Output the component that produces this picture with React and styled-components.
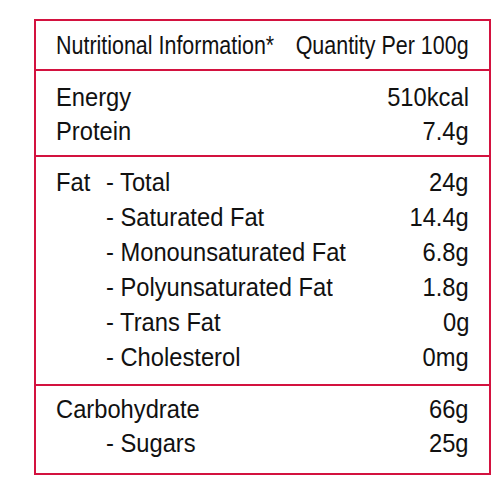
import styled, { createGlobalStyle } from "styled-components";

const Global = createGlobalStyle`
  body {
    margin: 0;
    background: #fff;
  }
`;

const Page = styled.div`
  width: 500px;
  height: 500px;
  padding: 19px 0 0 34px;
  box-sizing: border-box;
`;

const Panel = styled.div`
  width: 457px;
  box-sizing: border-box;
  border: 2px solid #d3123f;
  font-family: "Liberation Sans", Arial, sans-serif;
  color: #111;
`;

const Section = styled.div`
  padding: ${(p) => p.$top || 0}px 20px ${(p) => p.$bottom || 0}px;
  border-bottom: ${(p) => (p.$last ? "none" : "2px solid #d3123f")};
`;

const Row = styled.div`
  display: grid;
  grid-template-columns: 50px 1fr auto;
  align-items: center;
  height: ${(p) => p.$h || 34}px;
  white-space: nowrap;
  font-size: ${(p) => (p.$head ? 26 : 25.5)}px;
`;

// the label's font is a narrow Arial, so squeeze Liberation Sans sideways
const Cell = styled.span`
  display: block;
  transform: scaleX(${(p) => p.$scale || 0.93});
`;

const Label = styled(Cell)`
  grid-column: ${(p) => (p.$wide ? "1 / 3" : "2")};
  transform-origin: left center;
`;

const Group = styled(Cell)`
  grid-column: 1;
  transform-origin: left center;
`;

const Value = styled(Cell)`
  grid-column: 3;
  text-align: right;
  transform-origin: right center;
`;

const fats = [
  ["- Total", "24g"],
  ["- Saturated Fat", "14.4g"],
  ["- Monounsaturated Fat", "6.8g"],
  ["- Polyunsaturated Fat", "1.8g"],
  ["- Trans Fat", "0g"],
  ["- Cholesterol", "0mg"],
];

export default function App() {
  return (
    <Page>
      <Global />
      <Panel>
        <Section>
          <Row $h={48} $head>
            <Label $wide $scale={0.825}>
              Nutritional Information*
            </Label>
            <Value $scale={0.825}>Quantity Per 100g</Value>
          </Row>
        </Section>
        <Section $top={9} $bottom={7}>
          <Row>
            <Label $wide>Energy</Label>
            <Value>510kcal</Value>
          </Row>
          <Row>
            <Label $wide>Protein</Label>
            <Value>7.4g</Value>
          </Row>
        </Section>
        <Section $top={8} $bottom={9}>
          {fats.map(([name, qty], i) => (
            <Row key={name} $h={35}>
              {i === 0 && <Group>Fat</Group>}
              <Label>{name}</Label>
              <Value>{qty}</Value>
            </Row>
          ))}
        </Section>
        <Section $top={6} $bottom={13} $last>
          <Row>
            <Label $wide>Carbohydrate</Label>
            <Value>66g</Value>
          </Row>
          <Row>
            <Label>- Sugars</Label>
            <Value>25g</Value>
          </Row>
        </Section>
      </Panel>
    </Page>
  );
}
